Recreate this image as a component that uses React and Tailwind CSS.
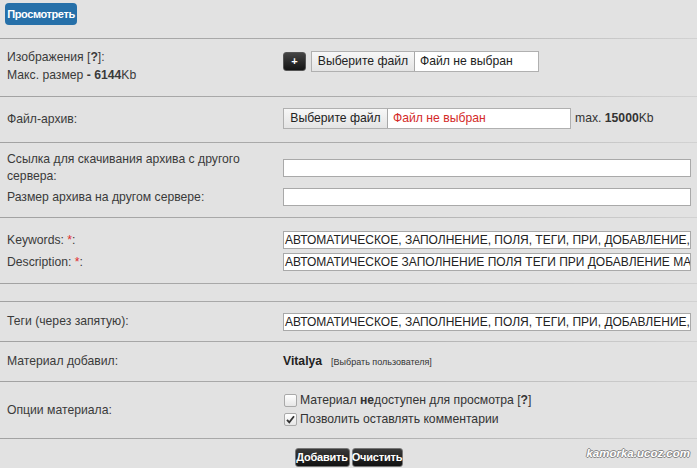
import React from "react";

const Line = () => (
  <div className="h-px bg-linear-to-r from-[#a2a2a2] via-[#acacac] to-[#d2d2d2]" />
);

function Row({ label, children, className = "" }) {
  return (
    <div className={`flex ${className}`}>
      <div className="w-[283px] shrink-0 pl-[7px] pr-2 text-[#3a3a3a]">{label}</div>
      <div className="flex-1 min-w-0 pr-[6px]">{children}</div>
    </div>
  );
}

function TextField({ value = "" }) {
  return (
    <div className="h-[18px] bg-white border border-[#a9a9a9] overflow-hidden whitespace-nowrap leading-[16px] pl-px text-[#222] text-[12px]">
      {value}
    </div>
  );
}

function FileInput({ width, btn, red }) {
  return (
    <div className={`flex h-[21px] border border-[#b0b0b0] bg-white ${width}`}>
      <div
        className={`flex items-center justify-center ${btn} shrink-0 bg-linear-to-b from-[#f7f7f7] to-[#e4e4e4] border-r border-[#a8a8a8] text-[#222]`}
      >
        Выберите файл
      </div>
      <div className={`flex items-center pl-[5px] ${red ? "text-[#d42a2a]" : "text-[#222]"}`}>
        Файл не выбран
      </div>
    </div>
  );
}

function Checkbox({ checked }) {
  return (
    <div className="w-[13px] h-[13px] rounded-[2px] border border-[#a9a9a9] bg-linear-to-b from-white to-[#e6e6e6] flex items-center justify-center">
      {checked && (
        <svg width="11" height="11" viewBox="0 0 11 11">
          <path d="M2 5.8 L4.3 8.3 L9 2.3" fill="none" stroke="#333" strokeWidth="1.8" />
        </svg>
      )}
    </div>
  );
}

const DarkButton = ({ children, className = "" }) => (
  <div
    className={`h-[19px] flex items-center justify-center rounded-[3px] border border-[#777] bg-linear-to-b from-[#3a3a3a] to-[#111] text-white font-bold text-[11px] tracking-[-0.2px] ${className}`}
  >
    {children}
  </div>
);

export default function App() {
  return (
    <div className="w-[697px] h-[468px] overflow-hidden bg-[#e2e2e2] font-['Liberation_Sans',Arial,sans-serif] text-[12.2px] text-[#333]">
      {/* preview button */}
      <div className="h-[38px] pt-[3px] pl-[5px]">
        <div className="w-[72px] h-[22px] rounded-[4px] bg-[#2670a9] text-white text-[11px] font-bold tracking-[-0.4px] flex items-center justify-center">
          Просмотреть
        </div>
      </div>
      <Line />

      {/* images */}
      <Row
        className="h-[57px] items-start"
        label={
          <div className="pt-[9px] leading-[18px]">
            <div>
              Изображения [<b>?</b>]:
            </div>
            <div>
              Макс. размер <b>- 6144</b>Kb
            </div>
          </div>
        }
      >
        <div className="pt-[12px] flex items-center gap-[5px]">
          <div className="w-[23px] h-[19px] rounded-[3px] bg-linear-to-b from-[#444] to-[#151515] border border-[#555] text-white text-[11px] font-bold flex items-center justify-center">
            +
          </div>
          <FileInput width="w-[228px] h-[21px]" btn="w-[103px]" />
        </div>
      </Row>
      <Line />

      {/* archive */}
      <Row className="h-[45px] items-center" label="Файл-архив:">
        <div className="flex items-center gap-[4px] -mt-[2px]">
          <FileInput width="w-[288px]" btn="w-[104px]" red />
          <span>
            max. <b>15000</b>Kb
          </span>
        </div>
      </Row>
      <Line />

      {/* links */}
      <div className="h-[74px] pt-[7px]">
        <Row
          className="h-[35px] items-center"
          label={
            <div className="leading-[17px]">
              Ссылка для скачивания архива с другого
              <br />
              сервера:
            </div>
          }
        >
          <TextField />
        </Row>
        <Row className="h-[18px] mt-[3px] items-center" label="Размер архива на другом сервере:">
          <TextField />
        </Row>
      </div>
      <Line />

      {/* keywords */}
      <div className="h-[65px] pt-[13px]">
        <Row
          className="h-[18px] items-center"
          label={
            <span>
              Keywords: <span className="text-[#e03030]">*</span>:
            </span>
          }
        >
          <TextField value="АВТОМАТИЧЕСКОЕ, ЗАПОЛНЕНИЕ, ПОЛЯ, ТЕГИ, ПРИ, ДОБАВЛЕНИЕ, МАТЕРИАЛА" />
        </Row>
        <Row
          className="h-[18px] mt-[4px] items-center"
          label={
            <span>
              Description: <span className="text-[#e03030]">*</span>:
            </span>
          }
        >
          <TextField value="АВТОМАТИЧЕСКОЕ ЗАПОЛНЕНИЕ ПОЛЯ ТЕГИ ПРИ ДОБАВЛЕНИЕ МАТЕРИАЛА" />
        </Row>
      </div>
      <Line />
      <div className="h-[17px]" />
      <Line />

      {/* tags */}
      <Row className="h-[39px] items-center" label="Теги (через запятую):">
        <TextField value="АВТОМАТИЧЕСКОЕ, ЗАПОЛНЕНИЕ, ПОЛЯ, ТЕГИ, ПРИ, ДОБАВЛЕНИЕ, МАТЕРИАЛА" />
      </Row>
      <Line />

      {/* author */}
      <Row className="h-[39px] items-center" label="Материал добавил:">
        <div className="flex items-baseline">
          <b className="text-[#222]">Vitalya</b>
          <span className="ml-[9px] text-[9px] text-[#333]">[Выбрать пользователя]</span>
        </div>
      </Row>
      <Line />

      {/* options */}
      <Row className="h-[56px] items-center" label="Опции материала:">
        <div className="leading-[19px] pl-px">
          <div className="flex items-center gap-[3px]">
            <Checkbox />
            <span>
              Материал <b>не</b>доступен для просмотра [<b>?</b>]
            </span>
          </div>
          <div className="flex items-center gap-[3px]">
            <Checkbox checked />
            <span>Позволить оставлять комментарии</span>
          </div>
        </div>
      </Row>
      <Line />

      {/* submit */}
      <div className="relative h-[29px] pt-[9px] flex justify-center gap-[2px]">
        <DarkButton className="w-[55px]">Добавить</DarkButton>
        <DarkButton className="w-[51px]">Очистить</DarkButton>
        <div className="absolute right-[7px] top-[6px] italic font-bold text-[11.5px] text-white [text-shadow:1px_0_0_#888,-1px_0_0_#888,0_1px_0_#888,0_-1px_0_#888]">
          kamorka.ucoz.com
        </div>
      </div>
    </div>
  );
}
